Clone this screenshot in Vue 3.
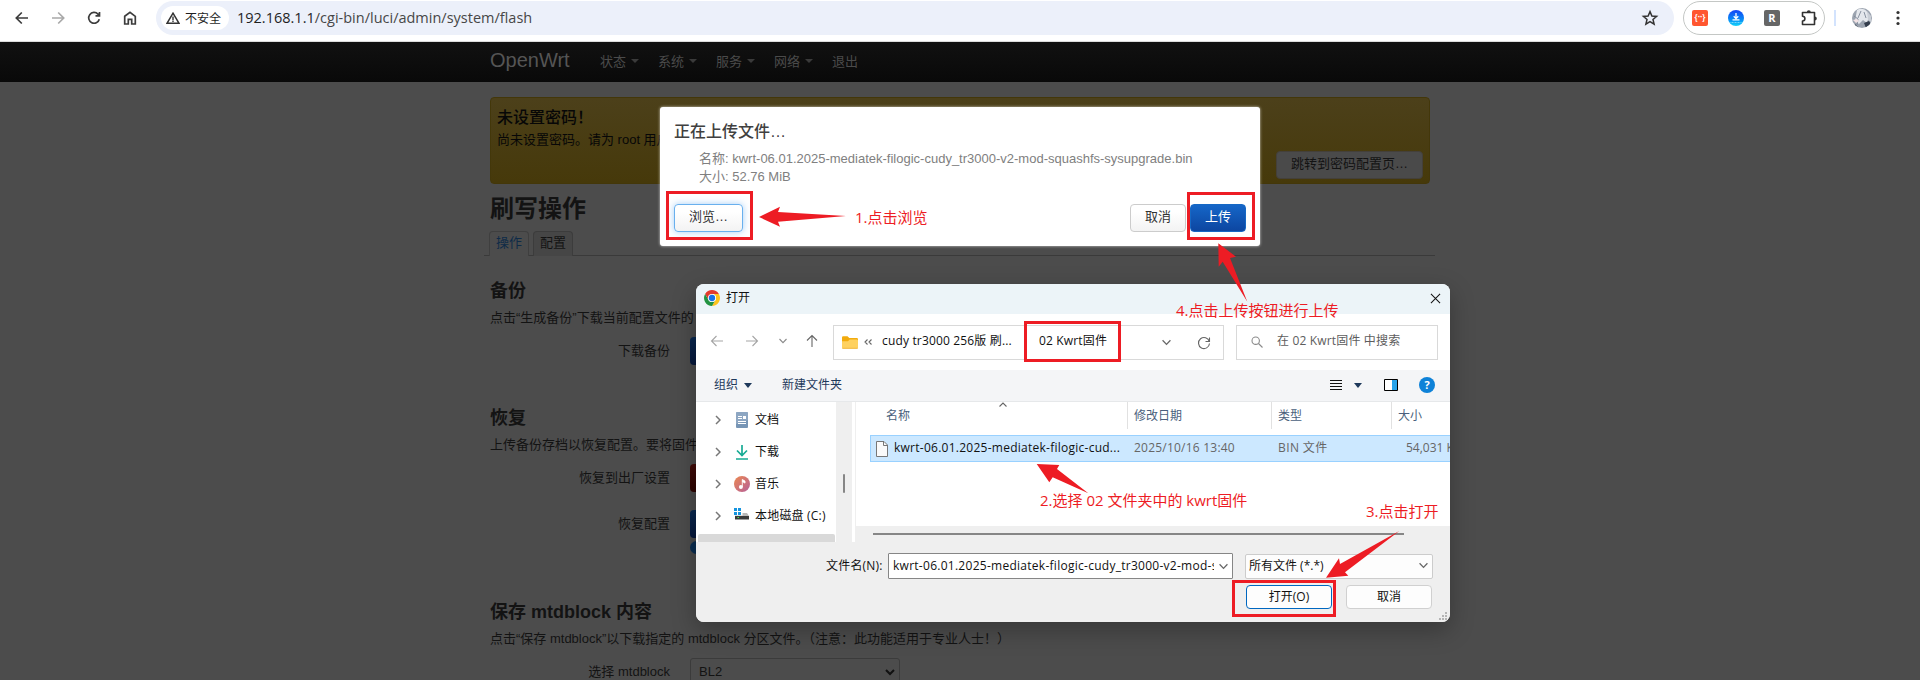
<script setup>
const navItems = ['状态', '系统', '服务', '网络']
const tree = [
  { name: '文档', icon: 'doc' },
  { name: '下载', icon: 'down' },
  { name: '音乐', icon: 'music' },
  { name: '本地磁盘 (C:)', icon: 'disk' },
]
</script>

<template>
  <div class="screen">
    <header class="chrome">
      <div class="nav-icons">
        <svg viewBox="0 0 20 20"><path d="M16 10H4.500M9.800 4.500 4.300 10l5.500 5.500" class="ln" /></svg>
        <svg viewBox="0 0 20 20" class="dim"><path d="M4 10h11.500M10.200 4.500l5.500 5.500-5.500 5.500" class="ln" /></svg>
        <svg viewBox="0 0 20 20"><path d="M15.300 11.200A5.400 5.400 0 1 1 14 6.100L15.300 7.500M15.500 3.900v4h-4" class="ln" /></svg>
        <svg viewBox="0 0 20 20"><path d="M4.700 8.300 10 4.300l5.300 4V16h-3.600v-4.600H8.300V16H4.700z" class="ln" /></svg>
      </div>
      <div class="omni">
        <div class="chip">
          <svg viewBox="0 0 14 12"><path d="M7 1.200 13 11.300H1z" fill="none" stroke="#333" stroke-width="1.500" /><path d="M7 4.500v3.400M7 8.600v1.400" stroke="#333" stroke-width="1.400" /></svg>
          <span>不安全</span>
        </div>
        <span class="url"><b>192.168.1.1</b>/cgi-bin/luci/admin/system/flash</span>
        <svg class="star" viewBox="0 0 20 20"><path d="M10 3.600l1.900 4.400 4.700.4-3.600 3.100 1.100 4.700-4.100-2.500-4.100 2.500L7 11.500 3.400 8.400l4.700-.4z" fill="none" stroke="#333" stroke-width="1.500" /></svg>
      </div>
      <div class="exts">
        <i class="ext red">{··}</i>
        <svg class="ext" viewBox="0 0 16 16"><defs><linearGradient id="bl" x1="0" y1="0" x2="0" y2="1"><stop offset="0" stop-color="#1443f5" /><stop offset=".6" stop-color="#078cf6" /><stop offset="1" stop-color="#14d4f8" /></linearGradient></defs><circle cx="8" cy="8" r="8" fill="url(#bl)" /><path d="M8 3v5M5.700 6.300 8 8.600l2.300-2.300M4.500 9.800h7" fill="none" stroke="#fff" stroke-width="1.300" /><path d="M2.500 12.500h11" stroke="#8fe4ff" stroke-width=".8" stroke-dasharray="1 .5" /></svg>
        <i class="ext gray">R</i>
        <svg class="ext puz" viewBox="0 0 18 18"><path d="M2.500 3.500h12v12h-12v-3.500a2.200 2.200 0 0 0 0-4.800z" fill="none" stroke="#333" stroke-width="1.600" stroke-linejoin="round" /><path d="M6.800 3.200a2 2 0 0 1 4 0zM14.800 7.500a2 2 0 0 1 0 4z" fill="#333" /></svg>
      </div>
      <i class="split"></i>
      <svg class="avatar" viewBox="0 0 20 20"><defs><clipPath id="av"><circle cx="10" cy="10" r="10" /></clipPath></defs><g clip-path="url(#av)"><path fill="#9ba3af" d="M0 0h20v20H0z" /><path d="M5 2c5-3 11 0 12 6l-2 7-4-3-4 4-4-3z" fill="#e4e7ec" /><path d="M2 8l4 3-1 6M9 3l-3 7M12 4l2 6" fill="none" stroke="#7d8796" stroke-width=".9" /><path d="M1 12l4-1 2 2-3 2z" fill="#f3e3e5" /><path d="M12 15l5-2 3 5-6 2zM3 16l4 4H2z" fill="#343d4c" /><path d="M15 3l4 5v6l-3-2z" fill="#c9ced6" /></g></svg>
      <svg class="dots" viewBox="0 0 4 16"><circle cx="2" cy="2.500" r="1.600" /><circle cx="2" cy="8" r="1.600" /><circle cx="2" cy="13.500" r="1.600" /></svg>
    </header>

    <main class="page">
      <nav class="topnav">
        <span class="brand">OpenWrt</span>
        <span v-for="n in navItems" :key="n" class="item">{{ n }}<i></i></span>
        <span class="item">退出</span>
      </nav>
      <div class="content">
        <section class="alert">
          <h4>未设置密码！</h4>
          <p>尚未设置密码。请为 root 用户</p>
          <button>跳转到密码配置页…</button>
        </section>
        <h2>刷写操作</h2>
        <div class="tabs"><span class="tab on">操作</span><span class="tab">配置</span></div>
        <section class="sec s-a">
          <h3>备份</h3>
          <p>点击“生成备份”下载当前配置文件的</p>
          <div class="row r1"><label>下载备份</label><i class="pbtn"></i></div>
        </section>
        <section class="sec s-b">
          <h3>恢复</h3>
          <p>上传备份存档以恢复配置。要将固件</p>
          <div class="row r1"><label>恢复到出厂设置</label><i class="pbtn rd"></i></div>
          <div class="row r2"><label>恢复配置</label><i class="pbtn"></i></div>
          <i class="help"></i>
        </section>
        <section class="sec">
          <h3>保存 mtdblock 内容</h3>
          <p>点击“保存 mtdblock”以下载指定的 mtdblock 分区文件。（注意：此功能适用于专业人士！）</p>
          <div class="row r1"><label>选择 mtdblock</label><div class="bl2">BL2<svg viewBox="0 0 10 7"><path d="M1 1l4 4 4-4" fill="none" stroke="#111" stroke-width="2" /></svg></div></div>
        </section>
      </div>
    </main>

    <section class="modal">
      <h4>正在上传文件…</h4>
      <ul><li>名称: kwrt-06.01.2025-mediatek-filogic-cudy_tr3000-v2-mod-squashfs-sysupgrade.bin</li><li>大小: 52.76 MiB</li></ul>
      <div class="acts"><button class="brw">浏览…</button><i class="grow"></i><button>取消</button><button class="up">上传</button></div>
    </section>

    <section class="dlg">
      <div class="title">
        <svg class="logo" viewBox="0 0 48 48"><circle cx="24" cy="24" r="23.900" fill="#fff" /><path d="M24 12h20.780A24 24 0 0 0 3.220 12l10.390 18L24 12z" fill="#e33b2e" /><path d="M34.390 30L24 48a24 24 0 0 0 20.780-36H24a12 12 0 0 1 10.390 18z" fill="#fcc31e" /><path d="M13.610 30L3.220 12A24 24 0 0 0 24 48l10.390-18a12 12 0 0 1-20.780 0z" fill="#229342" /><circle cx="24" cy="24" r="12" fill="#fff" /><circle cx="24" cy="24" r="9.500" fill="#1a73e8" /></svg>
        <span>打开</span>
        <svg class="x" viewBox="0 0 12 12"><path d="M1 1l10 10M11 1L1 11" stroke="#111" stroke-width="1.100" /></svg>
      </div>
      <div class="addr">
        <svg class="a1" viewBox="0 0 14 14"><path d="M13 7H1.500M6.500 2l-5 5 5 5" class="th lt" /></svg>
        <svg class="a2" viewBox="0 0 14 14"><path d="M1 7h11.500M7.500 2l5 5-5 5" class="th lt" /></svg>
        <svg class="a3" viewBox="0 0 8 8"><path d="M.5 2l3.500 3.700L7.500 2" class="th md" /></svg>
        <svg class="a4" viewBox="0 0 14 14"><path d="M7 13V1.500M2 6.500l5-5 5 5" class="th dk" /></svg>
        <div class="path">
          <svg class="folder" viewBox="0 0 16 13"><path d="M0 1.500A1.200 1.200 0 0 1 1.200.3h4.300L7.300 2H14.800A1.200 1.200 0 0 1 16 3.200V6H0z" fill="#f2ab0d" /><path d="M0 5.200h6L7.700 3.500H14.800A1.200 1.200 0 0 1 16 4.700v6.800A1.300 1.300 0 0 1 14.700 12.800H1.300A1.300 1.300 0 0 1 0 11.500z" fill="#fed160" /><path d="M.3 12.300h15.400" stroke="#eeb33b" stroke-width=".8" /></svg>
          <svg class="lq" viewBox="0 0 8 6"><path d="M3.500.5 1 3l2.500 2.500M7.500.5 5 3l2.500 2.500" class="th dk" /></svg>
          <span class="crumb1">cudy tr3000 256版 刷...</span>
          <span class="crumb2">02 Kwrt固件</span>
          <i class="grow"></i>
          <svg class="pc" viewBox="0 0 8 8"><path d="M.5 2l3.500 3.700L7.500 2" class="th dk" /></svg>
          <svg class="pr" viewBox="0 0 14 14"><path d="M12.300 5.500A5.500 5.500 0 1 0 12.500 7.500M12.500 1.500v4h-4" class="th dk" /></svg>
        </div>
        <div class="search">
          <svg viewBox="0 0 12 12"><circle cx="4.700" cy="4.700" r="3.700" class="th lens" /><path d="M7.500 7.500l4 4" class="th lens" /></svg>
          <span>在 02 Kwrt固件 中搜索</span>
        </div>
      </div>
      <div class="tools">
        <span>组织</span><i class="tri"></i><span class="newdir">新建文件夹</span><i class="grow"></i>
        <svg class="lst" viewBox="0 0 12 10"><path d="M0 .5h12M0 3.500h12M0 6.500h12M0 9.500h12" stroke="#111" /></svg>
        <i class="tri tri2"></i>
        <svg class="pane" viewBox="0 0 14 12"><path d="M.5.5h13v11H.5z" fill="#fff" stroke="#000" /><path d="M8 1h5v10H8z" fill="#27a3ea" /></svg>
        <i class="q">?</i>
      </div>
      <div class="body">
        <div class="tree">
          <div v-for="t in tree" :key="t.name" class="node">
            <svg class="chev" viewBox="0 0 6 10"><path d="M1 1l4 4-4 4" fill="none" stroke="#777" stroke-width="1.500" /></svg>
            <svg v-if="t.icon === 'doc'" class="ti" viewBox="0 0 16 16"><rect x="2" y="0" width="12" height="16" rx="1" fill="#7795b5" /><path d="M2 0h12v8L2 12z" fill="#9cb3cb" opacity=".6" /><path d="M4 4.500h4M4 6.500h4M4 9.500h8M4 11.500h8" stroke="#fff" /><path d="M9 4h3v3H9z" fill="#fff" /></svg>
            <svg v-else-if="t.icon === 'down'" class="ti" viewBox="0 0 16 16"><path d="M8 1v10M3 6.500l5 5 5-5M2 15h12" fill="none" stroke="#17ab94" stroke-width="1.700" /></svg>
            <svg v-else-if="t.icon === 'music'" class="ti" viewBox="0 0 16 16"><defs><linearGradient id="mu" x1="0" y1="0" x2="1" y2="1"><stop offset="0" stop-color="#ec8850" /><stop offset="1" stop-color="#b5609a" /></linearGradient></defs><circle cx="8" cy="8" r="8" fill="url(#mu)" /><circle cx="6.900" cy="10.900" r="2" fill="#fff" /><path d="M8.300 11V3.500l2.700 1.600v2L8.300 5.500" fill="#fff" stroke="#fff" stroke-width=".9" /></svg>
            <svg v-else class="ti" viewBox="0 0 16 16"><path d="M0 0h3v3H0zM4 0h3v3H4zM0 4h3v3H0zM4 4h3v3H4z" fill="#1594df" /><path d="M8.500 5h4.500l2 3H1V7.500h7.500z" fill="#b9b9b9" /><path d="M1 8h14v3.500H1z" fill="#3a3a3a" /><path d="M3.500 9.500h1.500" stroke="#4fe052" stroke-width="1.200" /></svg>
            <span :class="t.icon">{{ t.name }}</span>
          </div>
          <i class="hs"></i>
        </div>
        <div class="vs"><i></i></div>
        <div class="gut"></div>
        <div class="files">
          <svg class="sort" viewBox="0 0 8 5"><path d="M.5 4.500 4 1l3.500 3.500" class="th dk" /></svg>
          <div class="cols"><span>名称</span><span>修改日期</span><span>类型</span><span>大小</span></div>
          <div class="frow">
            <svg viewBox="0 0 12 16"><path d="M.5.500H8L11.500 4v11.500H.5z" fill="#fafafa" stroke="#777" /><path d="M7.500.5v4h4" fill="none" stroke="#777" /></svg>
            <span class="c c1">kwrt-06.01.2025-mediatek-filogic-cud...</span><span class="c c2">2025/10/16 13:40</span><span class="c c3">BIN 文件</span><span class="c">54,031 KB</span>
          </div>
          <div class="hbar"><i></i></div>
        </div>
      </div>
      <div class="foot">
        <div class="f1"><label>文件名(N):</label><div class="inp"><span>kwrt-06.01.2025-mediatek-filogic-cudy_tr3000-v2-mod-s</span><svg viewBox="0 0 8 8"><path d="M.5 2l3.500 3.700L7.500 2" class="th dk" /></svg></div><div class="sel"><span>所有文件 (*.*)</span><svg viewBox="0 0 8 8"><path d="M.5 2l3.500 3.700L7.500 2" class="th dk" /></svg></div></div>
        <div class="f2"><button class="ok">打开(O)</button><button>取消</button></div>
        <svg class="grip" viewBox="0 0 8 8"><path d="M6 0h2v2H6zM3 3h2v2H3zM6 3h2v2H6zM0 6h2v2H0zM3 6h2v2H3zM6 6h2v2H6z" fill="#b5b5b5" /></svg>
      </div>
    </section>

    <div class="notes">
      <svg viewBox="0 0 1920 680">
        <g fill="none" stroke="#ed1c24" stroke-width="3">
          <path d="M667.500 192.500h84v46h-84zM1188.500 193.500h65v45h-65zM1025.500 322.500h94v38h-94zM1233.500 581.500h101v34h-101z" />
        </g>
        <path fill="#ed1c24" d="M759 217l21-10.300-2 5.300 68 4-68 5.700 2 5zM1218.300 243.300l17.700 13.400-6 1.300 17.300 43.700-24.600-40-4 5zM1036.700 464l22.600 1-2.300 4 31.300 24.300-35.600-16-3.400 5zM1326 577.700l13-19.400 1 5.700 59.300-33-54.300 41.300 3.300 3.400z" />
      </svg>
      <span class="t1">1.点击浏览</span><span class="t2">2.选择 02 文件夹中的 kwrt固件</span><span class="t3">3.点击打开</span><span class="t4">4.点击上传按钮进行上传</span>
    </div>
  </div>
</template>

<style>
body { margin: 0; overflow: hidden; }
</style>
<style scoped>
* { box-sizing: border-box; }
i { font-style: normal; display: block; }
svg { display: block; flex: none; }
h2, h3, h4, p, ul { margin: 0; padding: 0; list-style: none; }
.screen { position: relative; width: 1920px; height: 680px; overflow: hidden; background: #4c4c4c; font-family: "Liberation Sans", "Noto Sans CJK SC", sans-serif; white-space: nowrap; }
.chrome { display: flex; height: 42px; background: #fff; border-bottom: 1px solid #dcdcdc; padding: 1px 0 0 12px; }
.nav-icons { display: flex; gap: 16px; width: 144px; padding-top: 7px; }
.nav-icons svg { width: 20px; height: 20px; }
.ln { fill: none; stroke: #3c3c3c; stroke-width: 1.7; }
.dim .ln { stroke: #a9a9a9; }
.omni { display: flex; align-items: center; width: 1518px; height: 34px; border-radius: 17px; background: #ecf0fa; padding-left: 5px; }
.chip { display: flex; align-items: center; width: 68px; height: 24px; border-radius: 12px; background: #fff; padding-left: 5px; gap: 5px; font: 12px/24px "Noto Sans CJK SC", sans-serif; color: #1f1f1f; }
.chip svg { width: 14px; height: 12px; }
.url { margin-left: 8px; flex: 1; padding-bottom: 1px; font: 14.5px/30px "Open Sans", sans-serif; color: #474747; }
.url b { font-weight: 400; color: #1f1f1f; }
.star { width: 20px; height: 20px; margin-right: 14px; }
.exts { display: flex; align-items: center; width: 142px; height: 34px; margin-left: 9px; border: 1px solid #c4c7c5; border-radius: 17px; padding-left: 8px; gap: 20px; }
.ext { width: 16px; height: 16px; border-radius: 2px; color: #fff; text-align: center; font: bold 11px/16px "Open Sans", sans-serif; flex: none; }
.ext.red { background: #ff5630; font-size: 8px; line-height: 14px; }
.ext.gray { background: #666; }
.puz { width: 18px; height: 18px; }
.split { width: 2px; height: 16px; margin: 9px 0 0 9px; background: #d3e3fd; }
.avatar { width: 20px; height: 20px; margin: 7px 0 0 16px; }
.dots { width: 4px; height: 16px; margin: 9px 0 0 24px; fill: #333; }

.page { height: 638px; color: #131313; font-size: 13px; line-height: 18px; }
.topnav { display: flex; height: 40px; padding-left: 490px; background: linear-gradient(#111, #090909); line-height: 37px; color: #4b4b4b; }
.brand { width: 110px; font-size: 20px; line-height: 36px; color: #555; }
.item { display: flex; align-items: center; width: 58px; height: 38px; gap: 5px; }
.item i { border: 4px solid transparent; border-top-color: #3a3a3a; border-bottom: 0; }
.content { padding: 15px 0 0 490px; }
.alert { position: relative; width: 940px; height: 87px; padding: 11px 6px; border: 1px solid #43370a; border-radius: 4px; background: linear-gradient(#4c401a, #46390a); color: #070707; }
.alert h4 { font-size: 16px; line-height: 18px; font-weight: 500; }
.alert p { margin-top: 4px; }
.alert button { position: absolute; right: 6px; bottom: 4px; width: 147px; height: 28px; padding: 0 0 2px; border: 1px solid #44403a; border-radius: 4px; background: #4a4a4a; color: #131313; font: 13px/24px "Liberation Sans", "Noto Sans CJK SC", sans-serif; }
.content h2 { margin-top: 7px; font-size: 24px; line-height: 36px; }
.tabs { display: flex; gap: 4px; width: 951px; height: 29px; margin: 0 0 0 -6px; padding: 4px 0 0 5px; border-bottom: 1px solid #3a3a3a; }
.tab { width: 40px; height: 25px; border: 1px solid #3c3c3c; border-bottom: 0; border-radius: 4px 4px 0 0; text-align: center; line-height: 22px; background: #464646; }
.tab.on { background: #4c4c4c; color: #0e2b48; border-color: #3f3f3f; }
.sec h3 { font-size: 18px; line-height: 36px; }
.s-a { margin-top: 17px; height: 127px; }
.s-b { height: 194px; }
.row { display: flex; }
.row label { width: 180px; text-align: right; margin-right: 20px; line-height: 28px; }
.r1 { margin-top: 10px; }
.r2 { margin-top: 18px; }
.pbtn { width: 56px; height: 28px; border-radius: 4px; background: linear-gradient(#09284f, #06173a); }
.pbtn.rd { background: linear-gradient(#400b08, #2c0301); }
.help { width: 13px; height: 13px; margin: 3px 0 0 200px; border-radius: 50%; background: #0a2d50; }
.bl2 { display: flex; align-items: center; justify-content: space-between; width: 210px; height: 28px; border: 1px solid #3b3b3b; border-radius: 3px; padding: 0 4px 0 8px; font-size: 13px; }
.bl2 svg { width: 10px; height: 7px; }

.modal { position: absolute; left: 660px; top: 107px; width: 600px; height: 139px; padding: 14px 14px 0; background: #fff; border-radius: 3px; box-shadow: 0 0 3px rgba(255,255,255,.75); color: #404040; }
.modal h4 { font-size: 16px; line-height: 22px; font-weight: 500; }
.modal ul { margin: 7px 0 0 25px; font-size: 13px; line-height: 18px; color: #808080; }
.acts { display: flex; margin-top: 18px; }
.grow { flex: 1; }
.acts button { width: 56px; height: 28px; padding: 0 0 2px; border: 1px solid #ccc; border-radius: 4px; background: linear-gradient(#fff 25%, #f3f3f3); font: 13px/24px "Liberation Sans", "Noto Sans CJK SC", sans-serif; color: #333; }
.acts .brw { width: 69px; border-color: #69b0ee; box-shadow: 0 0 7px rgba(80,160,240,.5); }
.acts .up { margin-left: 4px; background: linear-gradient(#1566c8, #0d46a1); border-color: #1668c4; color: #fff; }

.dlg { position: absolute; left: 696px; top: 284px; width: 754px; height: 338px; border-radius: 8px; background: #fff; overflow: hidden; box-shadow: 0 8px 24px rgba(0,0,0,.28); font: 12px/18px "Open Sans", "Noto Sans CJK SC", sans-serif; color: #111; }
.th { fill: none; stroke-width: 1.1; }
.lt { stroke: #a5a5a5; }
.md { stroke: #8b8b8b; }
.dk { stroke: #666; }
.lens { stroke: #8a8a8a; }
.title { display: flex; align-items: center; height: 30px; background: #ecf4f8; padding: 0 9px 2px 8px; }
.logo { width: 16px; height: 16px; margin-right: 6px; }
.title span { flex: 1; padding-bottom: 1px; line-height: 24px; }
.x { width: 11px; height: 11px; }
.addr { display: flex; align-items: center; height: 56px; }
.addr > svg { margin-bottom: 2px; }
.a1, .a2, .a4 { width: 14px; height: 14px; }
.a1 { margin-left: 14px; }
.a2 { margin-left: 21px; }
.a3 { width: 8px; height: 8px; margin-left: 20px; }
.a4 { margin-left: 18px; }
.path { display: flex; align-items: center; width: 391px; height: 35px; margin-left: 14px; border: 1px solid #d9d9d9; padding: 0 13px 0 8px; }
.path span, .search span { padding-bottom: 2px; letter-spacing: 0.16px; }
.folder { width: 16px; height: 13px; }
.lq { width: 8px; height: 6px; margin: 0 10px 0 6px; }
.crumb1 { width: 157px; }
.pc { width: 9px; height: 9px; margin-right: 26px; }
.pr { width: 14px; height: 14px; margin: 2px -1px 0 0; }
.search { display: flex; align-items: center; width: 202px; height: 35px; margin-left: 12px; border: 1px solid #d9d9d9; padding-left: 14px; color: #5d5d5d; }
.search svg { width: 12px; height: 12px; margin-right: 14px; }
.tools { display: flex; align-items: center; height: 32px; background: #f4f5f7; border-bottom: 1px solid #e6e8ea; padding: 0 15px 1px 18px; color: #1e395b; }
.tri { border: 4px solid transparent; border-top: 5px solid #1e395b; border-bottom: 0; margin-left: 6px; }
.newdir { margin-left: 30px; }
.lst { width: 12px; height: 10px; }
.tri2 { margin: 0 22px 0 12px; }
.pane { width: 14px; height: 12px; margin-right: 21px; }
.q { width: 16px; height: 16px; border-radius: 50%; background: #0e82d8; color: #fff; text-align: center; font: bold 11px/16px "Open Sans", sans-serif; }
.body { display: flex; height: 140px; }
.tree { width: 140px; padding: 2px 0 0 19px; }
.node { display: flex; align-items: center; height: 32px; }
.node span { padding-bottom: 1px; }
.node .disk { letter-spacing: 0.2px; }
.chev { width: 6px; height: 10px; margin-right: 13px; }
.ti { width: 16px; height: 16px; margin-right: 5px; }
.hs { width: 137px; height: 8px; margin: 2px 0 0 -17px; background: #d9d9d9; border-radius: 2px 2px 0 0; }
.vs { width: 16px; background: #efefef; padding: 72px 0 0 7px; }
.vs i { width: 2px; height: 19px; background: #868686; border-radius: 1px; }
.gut { width: 4px; border-right: 1px solid #efefef; }
.files { width: 594px; overflow: hidden; }
.sort { width: 8px; height: 5px; margin: 0 0 -5px 143px; }
.cols { display: grid; grid-template-columns: 242px 144px 120px 90px; height: 27px; padding-left: 30px; color: #4a5f7c; }
.cols span { border-right: 1px solid #e1e1e1; line-height: 27px; }
.cols span + span { padding-left: 6px; }
.frow { display: flex; align-items: center; height: 27px; margin: 6px 0 0 14px; background: #cce8ff; border: 1px solid #99d1ff; border-right: 0; padding-left: 5px; }
.frow svg { width: 12px; height: 16px; margin-right: 6px; }
.c { flex: none; padding-bottom: 1px; color: #666; }
.c1 { width: 240px; color: #111; letter-spacing: 0.255px; }
.c2 { width: 144px; letter-spacing: 0.22px; }
.c3 { width: 128px; letter-spacing: 0.4px; }
.hbar { height: 17px; margin-top: 64px; background: #efefef; padding: 7px 0 0 17px; }
.hbar i { width: 531px; height: 2px; background: #868686; }
.foot { height: 80px; background: #efefef; padding-top: 11px; }
.f1 { display: flex; align-items: center; height: 26px; padding-left: 130px; }
.f1 label { width: 62px; padding-bottom: 1px; letter-spacing: 0.2px; }
.inp { display: flex; align-items: center; width: 345px; height: 26px; border: 1px solid #868686; background: #fff; padding: 0 4px; border-radius: 1px; }
.inp span { width: 321px; overflow: hidden; letter-spacing: 0.27px; }
.inp svg, .sel svg { width: 9px; height: 9px; margin-left: auto; }
.sel { display: flex; align-items: center; width: 188px; height: 25px; margin-left: 12px; border: 1px solid #ccc; background: #fdfdfd; padding: 0 4px 1px 3px; border-radius: 2px; }
.f2 { display: flex; gap: 14px; margin: 6px 0 0 550px; }
.f2 button { width: 86px; height: 24px; padding: 0 0 1px; border: 1px solid #d0d0d0; border-radius: 4px; background: #fdfdfd; font: 12px/20px "Open Sans", "Noto Sans CJK SC", sans-serif; color: #111; }
.f2 .ok { border: 1px solid #0067c0; }
.grip { width: 8px; height: 8px; margin: 3px 0 0 743px; }

.notes { position: absolute; inset: 0; color: #ed1c24; font: 15px/20px "Open Sans", "Noto Sans CJK SC", sans-serif; }
.notes svg { width: 1920px; height: 680px; }
.notes span { position: absolute; }
.t1 { left: 855px; top: 207px; }
.t2 { left: 1040px; top: 490px; }
.t3 { left: 1366px; top: 501px; }
.t4 { left: 1176px; top: 300px; }
</style>
